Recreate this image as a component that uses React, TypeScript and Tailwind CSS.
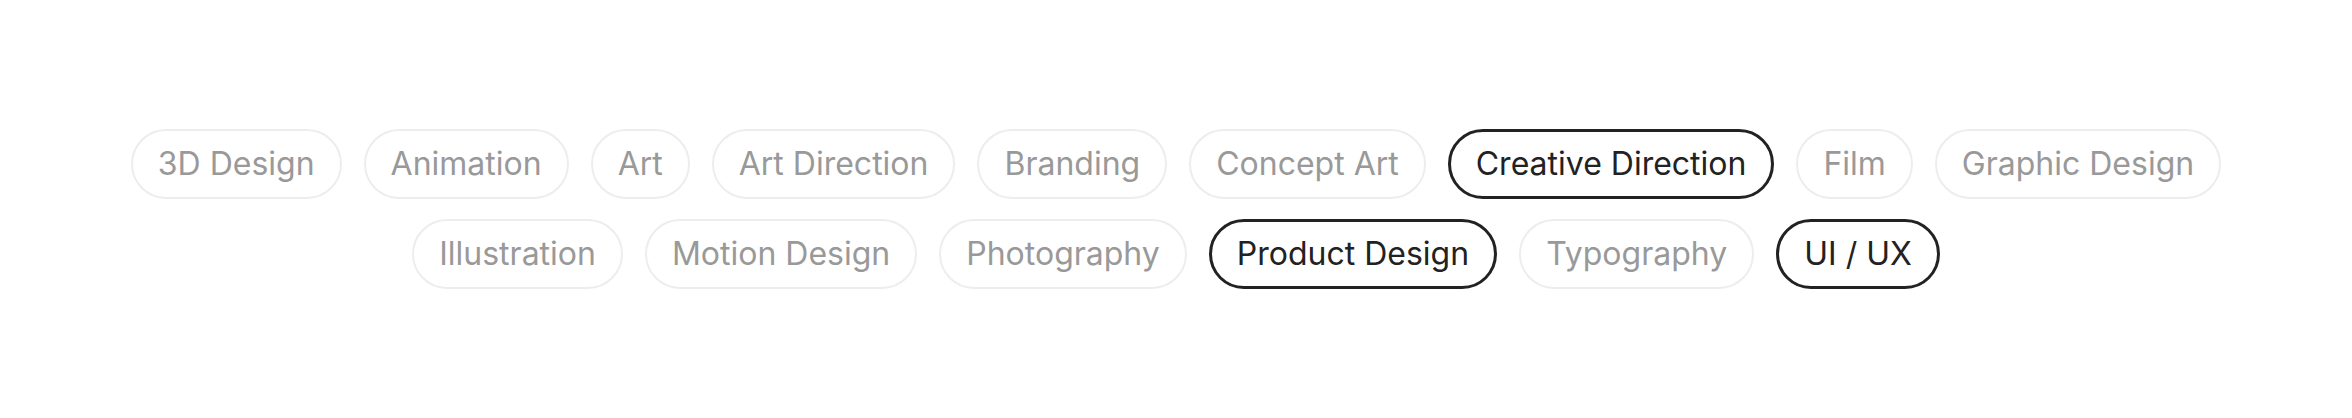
import React from 'react';

const rows: { label: string; active?: boolean }[][] = [
  [
    { label: '3D Design' },
    { label: 'Animation' },
    { label: 'Art' },
    { label: 'Art Direction' },
    { label: 'Branding' },
    { label: 'Concept Art' },
    { label: 'Creative Direction', active: true },
    { label: 'Film' },
    { label: 'Graphic Design' },
  ],
  [
    { label: 'Illustration' },
    { label: 'Motion Design' },
    { label: 'Photography' },
    { label: 'Product Design', active: true },
    { label: 'Typography' },
    { label: 'UI / UX', active: true },
  ],
];

const Pill: React.FC<{ label: string; active?: boolean }> = ({ label, active }) => (
  <button
    className={`h-[70px] px-[25px] flex items-center rounded-full text-[32px] leading-none whitespace-nowrap ${
      active ? 'border-[3px] border-[#222222] text-[#222222]' : 'border-2 border-[#ededed] text-[#999999]'
    }`}
  >
    {label}
  </button>
);

export default function App() {
  return (
    <div
      className="w-[2352px] h-[418px] bg-white flex flex-col items-center justify-center gap-[20px]"
      style={{ fontFamily: 'Inter, "Liberation Sans", sans-serif' }}
    >
      {rows.map((row, i) => (
        <div key={i} className="flex justify-center gap-[22px]">
          {row.map((p) => (
            <Pill key={p.label} label={p.label} active={p.active} />
          ))}
        </div>
      ))}
    </div>
  );
}
